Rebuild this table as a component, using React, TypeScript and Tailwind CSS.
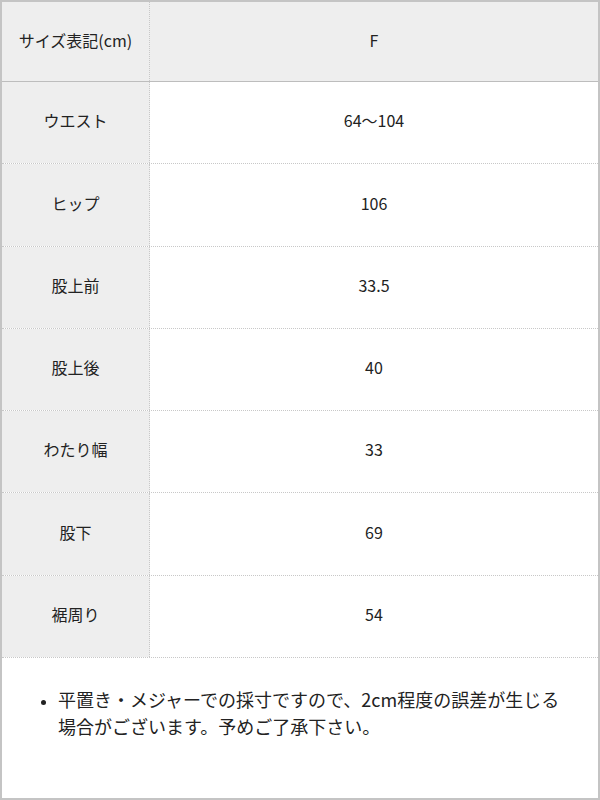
const rows: { label: string; value: string; h: string }[] = [
  { label: "ウエスト", value: "64〜104", h: "h-[82px]" },
  { label: "ヒップ", value: "106", h: "h-[83px]" },
  { label: "股上前", value: "33.5", h: "h-[82px]" },
  { label: "股上後", value: "40", h: "h-[82px]" },
  { label: "わたり幅", value: "33", h: "h-[82px]" },
  { label: "股下", value: "69", h: "h-[83px]" },
  { label: "裾周り", value: "54", h: "h-[82px]" },
];

export default function App() {
  return (
    <div
      className="w-[600px] h-[800px] border-2 border-[#c4c4c4] bg-white text-[#222] flex flex-col"
      style={{ fontFamily: '"Noto Sans CJK JP", "Noto Sans", sans-serif' }}
    >
      {/* header */}
      <div className="flex h-[80px] shrink-0 bg-[#eeeeee] border-b border-[#bdbdbd] text-[16px]">
        <div className="w-[148px] flex items-center justify-center pb-[4px] border-r border-dotted border-[#c8c8c8]">
          サイズ表記(cm)
        </div>
        <div className="flex-1 flex items-center justify-center pb-[4px]">F</div>
      </div>

      {rows.map((r) => (
        <div key={r.label} className={`flex shrink-0 border-b border-dotted border-[#c8c8c8] text-[16px] ${r.h}`}>
          <div className="w-[148px] bg-[#eeeeee] flex items-center justify-center pb-[5px] border-r border-dotted border-[#c8c8c8]">
            {r.label}
          </div>
          <div className="flex-1 flex items-center justify-center pb-[5px]">{r.value}</div>
        </div>
      ))}

      {/* note */}
      <div className="flex-1 pt-[28px] pl-[39px] pr-2 text-[18px] leading-[27px]">
        <ul className="list-disc pl-[17px] marker:text-[14px]">
          <li>
            平置き・メジャーでの採寸ですので、2cm程度の誤差が生じる
            <br />
            場合がございます。予めご了承下さい。
          </li>
        </ul>
      </div>
    </div>
  );
}
